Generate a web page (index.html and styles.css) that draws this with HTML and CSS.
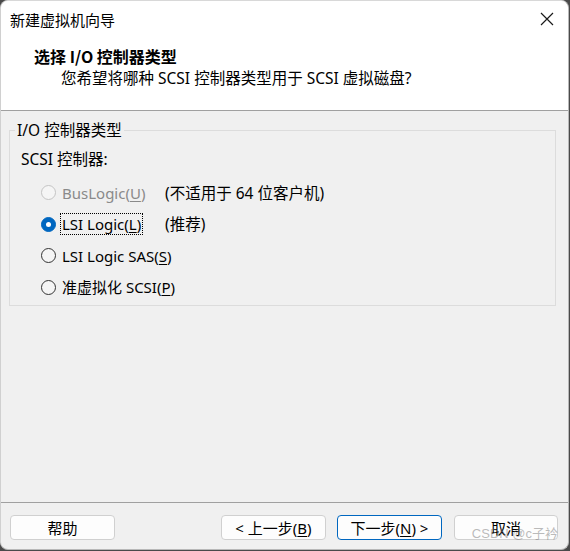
FILE: index.html
```html
<!DOCTYPE html>
<html lang="zh-CN">
<head>
<meta charset="utf-8">
<title>新建虚拟机向导</title>
<link rel="stylesheet" href="styles.css">
</head>
<body>
<div class="window">
  <div class="top">
    <div class="titlebar">
      <span class="title">新建虚拟机向导</span>
      <svg class="close" width="14" height="14" viewBox="0 0 14 14"><path d="M1 1 L13 13 M13 1 L1 13" stroke="#1a1a1a" stroke-width="1.2" fill="none"/></svg>
    </div>
    <div class="header">
      <div class="h-title">选择 I/O 控制器类型</div>
      <div class="h-sub">您希望将哪种 SCSI 控制器类型用于 SCSI 虚拟磁盘?</div>
    </div>
  </div>
  <div class="body">
    <fieldset class="group">
      <legend>I/O 控制器类型</legend>
      <div class="label">SCSI 控制器:</div>
      <div class="options">
        <div class="opt disabled"><span class="radio"></span><span class="otext">BusLogic(<u>U</u>)</span></div>
        <div class="note">(不适用于 64 位客户机)</div>
        <div class="opt"><span class="radio on"></span><span class="otext focus">LSI Logic(<u>L</u>)</span></div>
        <div class="note">(推荐)</div>
        <div class="opt"><span class="radio"></span><span class="otext">LSI Logic SAS(<u>S</u>)</span></div>
        <div class="note"></div>
        <div class="opt"><span class="radio"></span><span class="otext">准虚拟化 SCSI(<u>P</u>)</span></div>
        <div class="note"></div>
      </div>
    </fieldset>
  </div>
  <div class="footer">
    <button class="btn">帮助</button>
    <span class="spacer"></span>
    <button class="btn back">&lt; 上一步(<u>B</u>)</button>
    <button class="btn next default">下一步(<u>N</u>) &gt;</button>
    <button class="btn cancel">取消</button>
    <span class="watermark">CSDN @c子衿</span>
  </div>
</div>
</body>
</html>
```
FILE: styles.css
```css
html, body {
  margin: 0;
  padding: 0;
}
body {
  width: 570px;
  height: 551px;
  background: #4a4a4a;
  font-family: "Noto Sans", "Noto Sans CJK SC", sans-serif;
  font-size: 15px;
  color: #000;
  overflow: hidden;
}
.window {
  width: 567px;
  height: 548px;
  border: 1px solid #b8b8b8;
  border-top-color: #d8d8d8;
  border-left-color: #d0d0d0;
  border-radius: 8px;
  background: #f0f0f0;
  display: flex;
  flex-direction: column;
  overflow: hidden;
  position: relative;
}
.top {
  background: #ffffff;
  height: 109px;
  border-bottom: 1px solid #a0a0a0;
  flex: none;
}
.titlebar {
  height: 37px;
  display: flex;
  align-items: center;
  justify-content: space-between;
  padding: 0 14px 0 9px;
}
.title {
  font-size: 15px;
  font-family: "Noto Sans CJK SC", sans-serif;
  line-height: 20px;
}
.close {
  display: block;
  margin-top: -2px;
}
.header {
  padding-top: 7px;
}
.h-title {
  margin-left: 33px;
  font-weight: bold;
  font-size: 16px;
  line-height: 22px;
  font-family: "Noto Sans CJK SC", sans-serif;
}
.h-sub {
  margin-left: 60px;
  font-size: 15.5px;
  line-height: 22px;
}
.body {
  flex: 1;
  border-bottom: 1px solid #a0a0a0;
  padding: 9px 0 0 8px;
}
.group {
  margin: 0;
  width: 547px;
  border: 1px solid #dcdcdc;
  padding: 0 0 2px 5px;
  box-sizing: border-box;
  min-width: 0;
}
.group legend {
  padding: 0 2px;
  font-size: 15.5px;
  line-height: 20px;
}
.label {
  margin: 9px 0 0 6px;
  line-height: 20px;
  font-size: 15.5px;
}
.options {
  margin-top: 8px;
  display: grid;
  grid-template-columns: 150px 1fr;
  grid-auto-rows: 31.5px;
  align-items: center;
  white-space: nowrap;
}
.opt {
  display: flex;
  align-items: center;
  padding-left: 26px;
}
.radio {
  width: 13px;
  height: 13px;
  border: 1px solid #333;
  border-radius: 50%;
  background: #f5f5f5;
  flex: none;
  box-sizing: content-box;
  margin-right: 4px;
  position: relative;
}
.radio.on {
  background: #0067c0;
  border-color: #0067c0;
}
.radio.on::after {
  content: "";
  position: absolute;
  left: 4px;
  top: 4px;
  width: 5px;
  height: 5px;
  border-radius: 50%;
  background: #fff;
}
.disabled .radio {
  border-color: #c4c4c4;
  background: #f5f5f5;
}
.otext {
  font-size: 15px;
  line-height: 20px;
  padding: 0 1px;
  border: 1px dotted transparent;
}
.otext.focus {
  border-color: #000;
}
.otext u {
  text-decoration-thickness: 1px;
  text-underline-offset: 2px;
}
.disabled .otext {
  color: #8a8a8a;
}
.note {
  font-size: 15.5px;
  line-height: 20px;
}
.footer {
  flex: none;
  height: 46px;
  display: flex;
  align-items: flex-start;
  padding: 12px 10px 0 9px;
  box-sizing: border-box;
  position: relative;
}
.spacer {
  flex: 1;
}
.btn {
  height: 25px;
  width: 105px;
  padding: 0;
  background: #fdfdfd;
  border: 1px solid #d0d0d0;
  border-radius: 4px;
  font-family: "Noto Sans", "Noto Sans CJK SC", sans-serif;
  font-size: 15px;
  line-height: 20px;
  color: #000;
}
.btn u {
  text-underline-offset: 2px;
}
.next {
  margin-left: 11px;
}
.default {
  border-color: #0067c0;
}
.cancel {
  margin-left: 12px;
  width: 104px;
}
.watermark {
  position: absolute;
  right: 10px;
  top: 20px;
  font-family: "Liberation Sans", "Noto Sans CJK SC", sans-serif;
  font-size: 13px;
  color: rgba(120, 120, 120, 0.5);
  pointer-events: none;
}
```
